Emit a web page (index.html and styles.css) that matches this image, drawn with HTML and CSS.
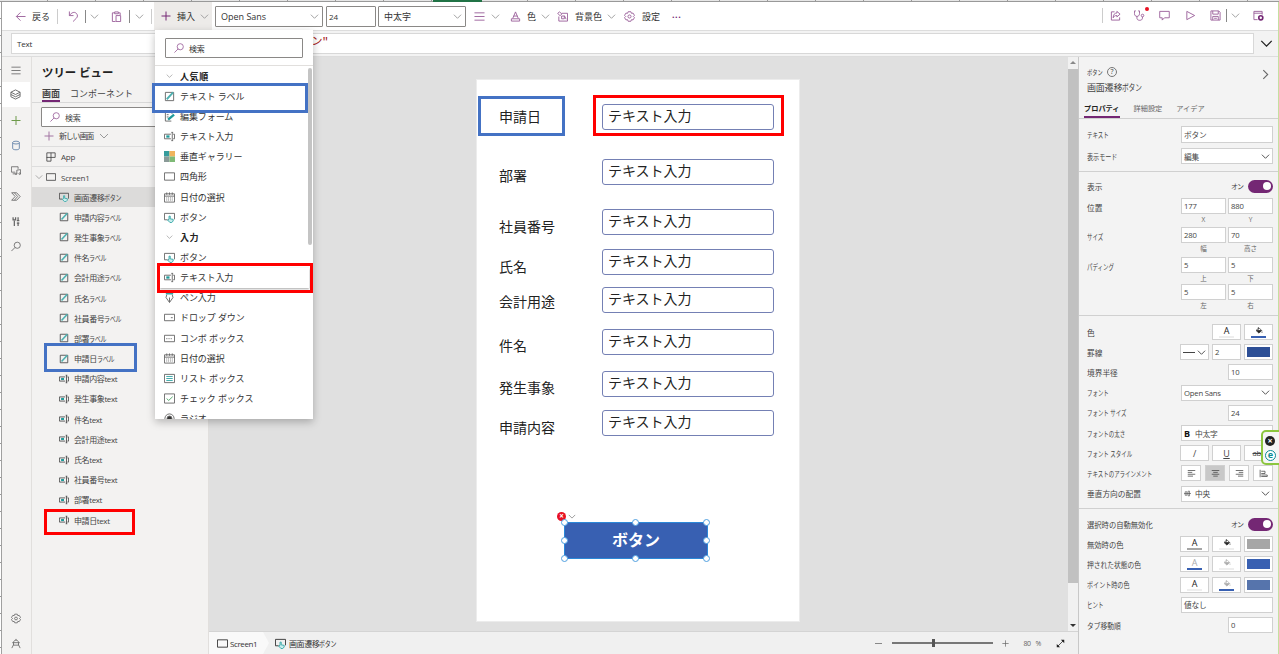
FILE: index.html
```html
<!DOCTYPE html>
<html lang="ja">
<head>
    <meta charset="UTF-8">
    <meta name="viewport" content="width=device-width, initial-scale=1.0">
    <title>Power Apps</title>
    <link rel="stylesheet" href="styles.css">
</head>
<body>
    <svg class="sprite">
        <symbol id="chev" viewBox="0 0 10 10"><path d="M1 3l4 4 4-4"/></symbol>
        <symbol id="plus" viewBox="0 0 10 10"><path d="M5 .5v9M.5 5h9"/></symbol>
        <symbol id="back" viewBox="0 0 12 12"><path d="M11.500 6H1.500M6 1.500L1.500 6 6 10.500"/></symbol>
        <symbol id="undo" viewBox="0 0 12 12"><path d="M1.500 .5v4.500H6M1.500 5C4 1.500 7 .5 9 2.500c2 2 1.500 4 0 5.500L5.500 11.500"/></symbol>
        <symbol id="paste" viewBox="0 0 12 12"><path d="M4 2H1.500v9.500H5M8 2h2v2.500M4 1h4v2H4zM5.500 5h5v6.500h-5z"/></symbol>
        <symbol id="lines" viewBox="0 0 12 12"><path d="M.5 2h11M.5 6h11M.5 10h11"/></symbol>
        <symbol id="fontcolor" viewBox="0 0 12 12"><path d="M3 8l3-7 3 7M4 5.500h4M1.500 8.500h9v2.500h-9z"/></symbol>
        <symbol id="fill" viewBox="0 0 12 12"><path d="M5 2.500h6.500v8.500H2V6M.8 2.500l2-1.500 2.500 2.200-2 2zM5 5.500h3v3H5zM8 5l2 4"/></symbol>
        <symbol id="gear" viewBox="0 0 12 12"><path d="M4.500 .8h3l.6 1.700 1.800-.2 1.500 2.500L10.200 6l1.200 1.200-1.500 2.500-1.800-.2-.6 1.700h-3l-.6-1.700-1.800.2L.6 7.200 1.800 6 .6 4.800l1.500-2.500 1.800.2z"/><circle cx="6" cy="6" r="1.700"/></symbol>
        <symbol id="search" viewBox="0 0 12 12"><circle cx="7.500" cy="4.500" r="3.700"/><path d="M5 7L.5 11.500"/></symbol>
        <symbol id="share" viewBox="0 0 12 12"><path d="M5 2H1.500v9h9V8M7.500 1.500l3.500 3-3.500 3V6C5 6 4 7 3.500 8.500 3.500 5 5 3.300 7.500 3.300z"/></symbol>
        <symbol id="steth" viewBox="0 0 12 12"><path d="M2 1H.5v3c0 4 5.500 4 5.500 0V1H4.500M3.200 7v2c0 3 6 3 6 0V7.500"/><circle cx="9.300" cy="6" r="1.400"/></symbol>
        <symbol id="comment" viewBox="0 0 12 12"><path d="M.8 1.500h10.400v7H6L3.500 11V8.500H.8z"/></symbol>
        <symbol id="play" viewBox="0 0 12 12"><path d="M2 1.500L10.500 6 2 10.500z"/></symbol>
        <symbol id="save" viewBox="0 0 12 12"><path d="M1 1h8.500L11 2.500V11H1zM3 1v3.500h6V1M3 11V7h6v4M4.500 9h3"/></symbol>
        <symbol id="publish" viewBox="0 0 12 12"><path d="M5 10.500H1v-9h9V5M1 3.500h9"/><circle cx="8.500" cy="8.500" r="2.200" stroke="#742774" stroke-width="1.800"/></symbol>
        <symbol id="layers" viewBox="0 0 12 12"><path d="M6 1l5 2.500L6 6 1 3.500zM1 3.500v5L6 11l5-2.500v-5M1 6l5 2.500L11 6"/></symbol>
        <symbol id="db" viewBox="0 0 12 12"><ellipse cx="6" cy="2.500" rx="4" ry="1.700"/><path d="M2 2.500v7c0 2.200 8 2.200 8 0v-7"/></symbol>
        <symbol id="media" viewBox="0 0 12 12"><path d="M5 8H.5V1.500h8V4M2 10h3M7 10V5.500l4.500-.5v5"/><circle cx="6" cy="10" r="1"/><circle cx="10.500" cy="9.800" r="1"/></symbol>
        <symbol id="flow" viewBox="0 0 12 12"><path d="M.8 1.500h6L11 6l-4.200 4.500h-6L5 6zM4 1.500L8 6l-4 4.500"/></symbol>
        <symbol id="tools" viewBox="0 0 12 12"><path d="M4 5v6.500M2.500 1v3h3V1M8.500 1v4M8.500 7v4.500M7 5h3M7 8h3" stroke-width="1.500"/></symbol>
        <symbol id="robot" viewBox="0 0 12 12"><path d="M3 5c0-4 6-4 6 0v3H3zM1 11.500L3 7.500M11 11.500L9 7.500M1.500 5h9M6 2V.5"/></symbol>
        <symbol id="app" viewBox="0 0 12 12"><path d="M1 1h10v5.500H1zM1 6v5h5V1"/></symbol>
        <symbol id="rect" viewBox="0 0 12 12"><path d="M.5 2h11v8H.5z"/></symbol>
        <symbol id="label" viewBox="0 0 12 12"><path d="M1.500 1.500h9v9h-9z"/><path d="M3 9l7-7.500" stroke="#4db0b0" stroke-width="2"/></symbol>
        <symbol id="input" viewBox="0 0 12 12"><path d="M7.500 3.500H.5v5h7M9 1.500v9M8 1.500h2M8 10.500h2M10 3.500h1.500v5H10"/><path d="M2.500 6H6" stroke="#1f9a9a" stroke-width="2.500"/></symbol>
        <symbol id="button" viewBox="0 0 12 12"><path d="M4 8.500H.5V1.500h11V8"/><path d="M5.500 8V4.500h1.300v3L10 8v1.800L8.500 11.500h-2L4 8.800z" stroke="#34a6a6" fill="#c9eded"/></symbol>
        <symbol id="form" viewBox="0 0 12 12"><path d="M8 11H1.500V1H7l2 2M3 4h2M3 6.500h2"/><path d="M4.500 9.500L11 4" stroke="#1f9a9a" stroke-width="2.500"/></symbol>
        <symbol id="gallery" viewBox="0 0 12 12"><g stroke="none"><path fill="#359c9c" d="M0 0h6v6H0z"/><path fill="#f0b45c" d="M6 0h6v6H6z"/><path fill="#8a9a98" d="M0 6h6v6H0z"/><path fill="#7fba76" d="M6 6h6v6H6z"/></g></symbol>
        <symbol id="date" viewBox="0 0 12 12"><path d="M.5 2h11v9H.5zM.5 4.500h11M3 .5V3M6 .5V3M9 .5V3"/><path d="M2.500 6.500h7M2.500 8.700h7" stroke-dasharray="1 1"/></symbol>
        <symbol id="pen" viewBox="0 0 12 12"><path d="M3 3l-.8 3L6 11.500 9.800 6 9 3M6 11V6"/><path d="M2 1.500h8" stroke="#34a6a6" stroke-width="2.500"/></symbol>
        <symbol id="drop" viewBox="0 0 12 12"><path d="M.5 2.500h11v7H.5zM7.500 6.200h2"/></symbol>
        <symbol id="combo" viewBox="0 0 12 12"><path d="M.5 2.500h11v7H.5z"/><path d="M2.500 6.200h7" stroke-dasharray="1.200 1.200"/></symbol>
        <symbol id="list" viewBox="0 0 12 12"><path d="M.5 1.500h11v9H.5z"/><path d="M2.500 3.800h7M2.500 6h7M2.500 8.200h7" stroke="#34a6a6"/></symbol>
        <symbol id="check" viewBox="0 0 12 12"><path d="M.5 1h11v10H.5z"/><path d="M3 6l2 2.200L9.500 4" stroke="#4aa564"/></symbol>
        <symbol id="radio" viewBox="0 0 12 12"><circle cx="6" cy="6" r="5"/><circle cx="6" cy="6" r="2.700" fill="#333"/></symbol>
        <symbol id="bucket" viewBox="0 0 12 12"><path d="M1.500 6L6 2l4 4-4 4zM5 1v4" /><path d="M2.500 6h7L6 9.500zM10.500 7.500v2" fill="currentColor"/></symbol>
        <symbol id="al" viewBox="0 0 12 12"><path d="M1 2h10M1 4.500h6M1 7h10M1 9.500h7"/></symbol>
        <symbol id="ac" viewBox="0 0 12 12"><path d="M1 2h10M3 4.500h6M1 7h10M3 9.500h6"/></symbol>
        <symbol id="ar" viewBox="0 0 12 12"><path d="M1 2h10M5 4.500h6M1 7h10M4 9.500h7"/></symbol>
        <symbol id="aj" viewBox="0 0 12 12"><path d="M1.500 1v10M3 3h5v3H3M3 8h8v2H3"/></symbol>
        <symbol id="mid" viewBox="0 0 12 12"><path d="M0 6h12M2 3h3v6H2zM7 2h2.500v8H7z"/></symbol>
        <symbol id="expand" viewBox="0 0 12 12"><path d="M2 10l8-8"/><path d="M6.500 1h4.500v4.500zM1 6.500V11h4.500z" fill="currentColor" stroke="none"/></symbol>
    </svg>

    <div class="sheet-top"><div class="sheet-active"></div></div>
    <div class="frame">
        <div class="sheet-left"></div>
        <div class="studio">
            <div class="toolbar">
                <div class="tools">
                    <svg class="i"><use href="#back"/></svg>
                    <span>戻る</span>
                    <i class="sep"></i>
                    <svg class="i"><use href="#undo"/></svg>
                    <i class="sep dark"></i>
                    <svg class="c"><use href="#chev"/></svg>
                    <svg class="i"><use href="#paste"/></svg>
                    <i class="sep dark"></i>
                    <svg class="c"><use href="#chev"/></svg>
                    <i class="sep"></i>
                    <div class="insert">
                        <svg class="plus"><use href="#plus"/></svg>
                        <span>挿入</span>
                        <svg class="c"><use href="#chev"/></svg>
                    </div>
                    <div class="combo">Open Sans<svg class="c"><use href="#chev"/></svg></div>
                    <div class="combo num">24</div>
                    <div class="combo">中太字<svg class="c"><use href="#chev"/></svg></div>
                    <svg class="i"><use href="#lines"/></svg>
                    <svg class="c"><use href="#chev"/></svg>
                    <svg class="i"><use href="#fontcolor"/></svg>
                    <span>色</span>
                    <svg class="c"><use href="#chev"/></svg>
                    <svg class="i"><use href="#fill"/></svg>
                    <span>背景色</span>
                    <svg class="c"><use href="#chev"/></svg>
                    <svg class="i"><use href="#gear"/></svg>
                    <span>設定</span>
                    <span class="dots">···</span>
                </div>
                <div class="actions">
                    <i class="sep"></i>
                    <svg class="i"><use href="#share"/></svg>
                    <div class="health"><svg class="i"><use href="#steth"/></svg><i class="dot"></i></div>
                    <svg class="i"><use href="#comment"/></svg>
                    <svg class="i"><use href="#play"/></svg>
                    <svg class="i"><use href="#save"/></svg>
                    <i class="sep dark"></i>
                    <svg class="c"><use href="#chev"/></svg>
                    <svg class="i"><use href="#publish"/></svg>
                </div>
            </div>

            <div class="formula">
                <div class="formula-box"><span class="prop-name">Text</span><span class="expr">"ボタン"</span></div>
                <svg class="formula-chev"><use href="#chev"/></svg>
            </div>

            <div class="main">
                <div class="rail">
                    <svg><use href="#lines"/></svg>
                    <div class="rail-on"><svg><use href="#layers"/></svg></div>
                    <svg class="green"><use href="#plus"/></svg>
                    <svg class="blue"><use href="#db"/></svg>
                    <svg><use href="#media"/></svg>
                    <svg><use href="#flow"/></svg>
                    <svg><use href="#tools"/></svg>
                    <svg><use href="#search"/></svg>
                    <svg class="bottom"><use href="#gear"/></svg>
                    <svg><use href="#robot"/></svg>
                </div>

                <div class="tree">
                    <div class="tree-title">ツリー ビュー</div>
                    <div class="tree-tabs"><span class="on">画面</span><span>コンポーネント</span></div>
                    <div class="search"><svg><use href="#search"/></svg>検索</div>
                    <div class="new-screen"><svg><use href="#plus"/></svg><span>新しい画面</span><svg class="c"><use href="#chev"/></svg></div>
                    <div class="app-row"><svg><use href="#app"/></svg>App</div>
                    <div class="screen-row"><svg class="c"><use href="#chev"/></svg><svg><use href="#rect"/></svg>Screen1</div>
                    <div class="node on"><svg><use href="#button"/></svg>画面遷移<span class="kana">ボタン</span></div>
                    <div class="node"><svg><use href="#label"/></svg>申請内容<span class="kana">ラベル</span></div>
                    <div class="node"><svg><use href="#label"/></svg>発生事象<span class="kana">ラベル</span></div>
                    <div class="node"><svg><use href="#label"/></svg>件名<span class="kana">ラベル</span></div>
                    <div class="node"><svg><use href="#label"/></svg>会計用途<span class="kana">ラベル</span></div>
                    <div class="node"><svg><use href="#label"/></svg>氏名<span class="kana">ラベル</span></div>
                    <div class="node"><svg><use href="#label"/></svg>社員番号<span class="kana">ラベル</span></div>
                    <div class="node"><svg><use href="#label"/></svg>部署<span class="kana">ラベル</span></div>
                    <div class="node"><svg><use href="#label"/></svg>申請日<span class="kana">ラベル</span></div>
                    <div class="node"><svg><use href="#input"/></svg>申請内容text</div>
                    <div class="node"><svg><use href="#input"/></svg>発生事象text</div>
                    <div class="node"><svg><use href="#input"/></svg>件名text</div>
                    <div class="node"><svg><use href="#input"/></svg>会計用途text</div>
                    <div class="node"><svg><use href="#input"/></svg>氏名text</div>
                    <div class="node"><svg><use href="#input"/></svg>社員番号text</div>
                    <div class="node"><svg><use href="#input"/></svg>部署text</div>
                    <div class="node"><svg><use href="#input"/></svg>申請日text</div>
                </div>

                <div class="center">
                    <div class="stage">
                        <div class="canvas">
                            <div class="lbl r1">申請日</div><div class="txt r1">テキスト入力</div>
                            <div class="lbl r2">部署</div><div class="txt r2">テキスト入力</div>
                            <div class="lbl r3">社員番号</div><div class="txt r3">テキスト入力</div>
                            <div class="lbl r4">氏名</div><div class="txt r4">テキスト入力</div>
                            <div class="lbl r5">会計用途</div><div class="txt r5">テキスト入力</div>
                            <div class="lbl r6">件名</div><div class="txt r6">テキスト入力</div>
                            <div class="lbl r7">発生事象</div><div class="txt r7">テキスト入力</div>
                            <div class="lbl r8">申請内容</div><div class="txt r8">テキスト入力</div>
                            <div class="error"><b>×</b><svg><use href="#chev"/></svg></div>
                            <div class="go">ボタン
                                <i class="h t l"></i><i class="h t m"></i><i class="h t r"></i>
                                <i class="h c l"></i><i class="h c r"></i>
                                <i class="h b l"></i><i class="h b m"></i><i class="h b r"></i>
                            </div>
                        </div>
                        <div class="scroll"><i class="up"></i><div class="thumb"></div><i class="down"></i></div>
                    </div>
                    <div class="status">
                        <div class="crumb"><svg><use href="#rect"/></svg>Screen1</div>
                        <div class="crumb2"><svg><use href="#button"/></svg>画面遷移<span class="kana">ボタン</span></div>
                        <div class="zoom">
                            <i class="minus"></i>
                            <div class="slider"><i></i></div>
                            <svg class="zplus"><use href="#plus"/></svg>
                            <span>80</span><span class="pct">%</span>
                            <svg class="expand"><use href="#expand"/></svg>
                        </div>
                    </div>
                </div>

                <div class="props">
                    <div class="props-head">
                        <div class="kind"><span class="kana">ボタン</span><i>?</i></div>
                        <div class="name">画面遷移<span class="kana">ボタン</span></div>
                        <svg><use href="#chev"/></svg>
                    </div>
                    <div class="props-tabs"><span class="on">プロパティ</span><span>詳細設定</span><span>アイデア</span></div>
                    <div class="group g1">
                        <div class="row"><span class="n1">テキスト</span><div class="f w3">ボタン</div></div>
                        <div class="row"><span class="n2">表示モード</span><div class="f w3">編集<svg><use href="#chev"/></svg></div></div>
                    </div>
                    <div class="group g2">
                        <div class="row"><span>表示</span><div class="on-off"><em>オン</em><i class="toggle"></i></div></div>
                        <div class="row pair"><span>位置</span><div class="cell"><div class="f">177</div><small>X</small></div><div class="cell"><div class="f">880</div><small>Y</small></div></div>
                        <div class="row pair"><span class="n1">サイズ</span><div class="cell"><div class="f">280</div><small>幅</small></div><div class="cell"><div class="f">70</div><small>高さ</small></div></div>
                        <div class="row pair short"><span class="n1">パディング</span><div class="cell"><div class="f">5</div><small>上</small></div><div class="cell"><div class="f">5</div><small>下</small></div></div>
                        <div class="row pair short"><span></span><div class="cell"><div class="f">5</div><small>左</small></div><div class="cell"><div class="f">5</div><small>右</small></div></div>
                    </div>
                    <div class="group g3">
                        <div class="row"><span>色</span><div class="f sw"><b class="ink pale">A</b></div><div class="f sw"><b class="ink blue"><svg><use href="#bucket"/></svg></b></div></div>
                        <div class="row"><span>罫線</span><div class="f w1 dash"><i></i><svg><use href="#chev"/></svg></div><div class="f w1">2</div><div class="f sw"><i class="color navy"></i></div></div>
                        <div class="row"><span>境界半径</span><div class="f w2">10</div></div>
                        <div class="row"><span class="n1">フォント</span><div class="f w3">Open Sans<svg><use href="#chev"/></svg></div></div>
                        <div class="row"><span class="n1">フォント サイズ</span><div class="f w2">24</div></div>
                        <div class="row"><span class="n1">フォントの太さ</span><div class="f w3"><b class="bold">B</b>中太字</div></div>
                        <div class="row"><span class="n1">フォント スタイル</span><div class="f sw big">/</div><div class="f sw big"><u>U</u></div><div class="f sw"><s>abc</s></div></div>
                        <div class="row align"><span class="n1">テキストのアラインメント</span><div class="f"><svg><use href="#al"/></svg></div><div class="f sel"><svg><use href="#ac"/></svg></div><div class="f"><svg><use href="#ar"/></svg></div><div class="f"><svg><use href="#aj"/></svg></div></div>
                        <div class="row"><span>垂直方向の配置</span><div class="f w3"><svg class="lead"><use href="#mid"/></svg>中央<svg><use href="#chev"/></svg></div></div>
                    </div>
                    <div class="group g4">
                        <div class="row"><span class="n4">選択時の自動無効化</span><div class="on-off"><em>オン</em><i class="toggle"></i></div></div>
                        <div class="row"><span class="n4">無効時の色</span><div class="f sw"><b class="ink gray">A</b></div><div class="f sw"><b class="ink pale"><svg><use href="#bucket"/></svg></b></div><div class="f sw"><i class="color silver"></i></div></div>
                        <div class="row"><span class="n3">押された状態の色</span><div class="f sw"><b class="ink blue dim">A</b></div><div class="f sw"><b class="ink pale dim"><svg><use href="#bucket"/></svg></b></div><div class="f sw"><i class="color royal"></i></div></div>
                        <div class="row"><span class="n2">ポイント時の色</span><div class="f sw"><b class="ink pale">A</b></div><div class="f sw"><b class="ink blue dim"><svg><use href="#bucket"/></svg></b></div><div class="f sw"><i class="color steel"></i></div></div>
                        <div class="row"><span class="n1">ヒント</span><div class="f w3">値なし</div></div>
                        <div class="row"><span class="n3">タブ移動順</span><div class="f w2">0</div></div>
                    </div>
                </div>
            </div>
        </div>
    </div>

    <div class="menu">
        <div class="search"><svg><use href="#search"/></svg>検索</div>
        <div class="menu-list">
            <div class="head"><svg><use href="#chev"/></svg>人気順</div>
            <div class="item"><svg><use href="#label"/></svg>テキスト ラベル</div>
            <div class="item"><svg><use href="#form"/></svg>編集フォーム</div>
            <div class="item"><svg><use href="#input"/></svg>テキスト入力</div>
            <div class="item"><svg><use href="#gallery"/></svg>垂直ギャラリー</div>
            <div class="item"><svg><use href="#rect"/></svg>四角形</div>
            <div class="item"><svg><use href="#date"/></svg>日付の選択</div>
            <div class="item"><svg><use href="#button"/></svg>ボタン</div>
            <div class="head"><svg><use href="#chev"/></svg>入力</div>
            <div class="item"><svg><use href="#button"/></svg>ボタン</div>
            <div class="item hover"><svg><use href="#input"/></svg>テキスト入力</div>
            <div class="item"><svg><use href="#pen"/></svg>ペン入力</div>
            <div class="item"><svg><use href="#drop"/></svg>ドロップ ダウン</div>
            <div class="item"><svg><use href="#combo"/></svg>コンボ ボックス</div>
            <div class="item"><svg><use href="#date"/></svg>日付の選択</div>
            <div class="item"><svg><use href="#list"/></svg>リスト ボックス</div>
            <div class="item"><svg><use href="#check"/></svg>チェック ボックス</div>
            <div class="item"><svg><use href="#radio"/></svg>ラジオ</div>
        </div>
        <i class="menu-thumb"></i>
    </div>

    <div class="mark m1"></div>
    <div class="mark m2 red"></div>
    <div class="mark m3"></div>
    <div class="mark m4 red"></div>
    <div class="mark m5"></div>
    <div class="mark m6 red"></div>

    <div class="widget"><b>×</b><b class="e">e</b></div>
</body>
</html>
```
FILE: styles.css
```css
* {
    box-sizing: border-box;
}

body {
    margin: 0;
    width: 1279px;
    height: 654px;
    overflow: hidden;
    position: relative;
    display: flex;
    flex-direction: column;
    background: #fff;
    color: #333;
    font-family: "Open Sans", "Noto Sans CJK JP", sans-serif;
    font-size: 9px;
    white-space: nowrap;
}

i, em {
    font-style: normal;
}

svg {
    display: block;
    flex: none;
    width: 11px;
    height: 11px;
    fill: none;
    stroke: currentColor;
    stroke-width: 1;
    overflow: visible;
}

.sprite {
    position: absolute;
    width: 0;
    height: 0;
}

/* spreadsheet edges around the app */
.sheet-top {
    height: 2px;
    flex: none;
    border-bottom: 1px solid #999;
    background: repeating-linear-gradient(90deg, #e6e6e6 0, #e6e6e6 47px, #999 47px, #999 48px);
}

.sheet-active {
    width: 49px;
    height: 2px;
    margin-left: 433px;
    background: #217346;
}

.frame {
    flex: 1;
    display: flex;
    min-height: 0;
}

.sheet-left {
    width: 2px;
    border-right: 1px solid #a0a0a0;
    background: repeating-linear-gradient(#fff 0, #fff 16px, #999 16px, #999 17px);
}

.studio {
    flex: 1;
    min-width: 0;
    display: flex;
    flex-direction: column;
    border-right: 1px solid #c5dfa0;
}

/* toolbar */
.toolbar {
    height: 28px;
    flex: none;
    display: flex;
    justify-content: space-between;
    font-size: 9px;
}

.tools, .actions {
    height: 27px;
    display: grid;
    align-items: center;
}

.tools {
    padding-left: 13px;
    grid-template-columns: 17px 25px 11px 17px 5px 21px 18px 6px 16px 3px 61px 111px 52px 96px 17px 19px 17px 14px 16px 18px 32px 17px 18px 30px 12px;
}

.actions {
    grid-template-columns: 8px 24px 25px 26px 25px 16px 5px 22px 25px;
}

.i {
    color: #9a5f9a;
}

.c {
    width: 9px;
    height: 9px;
    color: #999;
}

.sep {
    width: 1px;
    height: 15px;
    background: #ccc;
}

.dark {
    height: 13px;
    background: #888;
}

.insert {
    height: 28px;
    width: 58px;
    padding-left: 7px;
    display: flex;
    align-items: center;
    background: #edebe9;
}

.insert .plus {
    width: 10px;
    height: 10px;
    margin-right: 6px;
    color: #742774;
}

.insert .c {
    margin-left: 5px;
}

.combo {
    height: 21px;
    width: 108px;
    padding: 0 3px 0 5px;
    display: flex;
    align-items: center;
    justify-content: space-between;
    border: 1px solid #8a8886;
    border-radius: 1px;
}

.combo.num {
    width: 50px;
    padding-left: 2px;
    font-size: 8px;
}

.num + .combo {
    width: 88px;
}

.dots {
    color: #742774;
    font-weight: bold;
    letter-spacing: 0.5px;
}

.health {
    position: relative;
}

.dot {
    position: absolute;
    left: 11px;
    top: -3px;
    width: 4px;
    height: 4px;
    border-radius: 50%;
    background: #e81123;
}

/* formula bar */
.formula {
    height: 27px;
    flex: none;
    display: flex;
    padding: 2px 0 0 9px;
    border-top: 1px solid #ddd;
    border-bottom: 1px solid #ddd;
    background: #f3f3f3;
}

.formula-box {
    width: 1243px;
    height: 21px;
    display: flex;
    align-items: center;
    padding-left: 5px;
    border: 1px solid #d8d8d8;
    background: #fff;
    font-size: 8px;
}

.prop-name {
    width: 267px;
    letter-spacing: -0.2px;
}

.expr {
    color: #a31515;
    font-family: "Liberation Mono", "Noto Sans CJK JP", monospace;
    font-size: 11px;
    letter-spacing: -0.4px;
    line-height: 12px;
    margin-top: -3px;
}

.formula-chev {
    width: 13px;
    height: 13px;
    margin: 4px 0 0 6px;
    color: #222;
}

.main {
    flex: 1;
    min-height: 0;
    display: flex;
    background: #f3f2f1;
}

/* left rail */
.rail {
    width: 30px;
    flex: none;
    display: flex;
    flex-direction: column;
    align-items: center;
    border-right: 1px solid #e1dfdd;
    padding: 0 2px 0 0;
    color: #666;
}

.rail > svg {
    width: 10px;
    margin: 7.1px 0;
    height: 11px;
}

.rail > svg:first-child {
    margin: 8px 0 6px;
}

.rail-on {
    width: 28px;
    height: 25px;
    display: grid;
    place-items: center;
    background: #fff;
}

.rail .green {
    color: #6d9a4a;
    margin-top: 8px;
}

.rail .blue {
    color: #5a7ca5;
}

.rail > svg.bottom {
    margin-top: auto;
}

.rail > svg:last-child {
    margin-bottom: 5px;
}

/* tree view */
.tree {
    width: 177px;
    flex: none;
    border-right: 1px solid #e1dfdd;
    font-size: 8px;
    color: #444;
}

.tree svg {
    width: 10px;
    height: 10px;
}

.tree-title {
    height: 29px;
    padding-left: 10px;
    font-size: 11.4px;
    font-weight: bold;
    line-height: 31px;
    color: #222;
}

.tree-tabs {
    height: 17px;
    display: flex;
    gap: 10px;
    padding-left: 10px;
    border-bottom: 1px solid #d8d8d8;
    font-size: 9px;
    line-height: 16px;
}

.tree-tabs .on {
    height: 16px;
    border-bottom: 2px solid #742774;
    font-weight: bold;
}

.search {
    display: flex;
    align-items: center;
    border: 1px solid #8a8886;
    border-radius: 1px;
    background: #fff;
    font-size: 8px;
}

.search svg {
    width: 10px;
    height: 10px;
    color: #9a5f9a;
}

.tree .search {
    height: 20px;
    margin: 4px 8px 0 9px;
    padding-left: 8px;
    gap: 5px;
    letter-spacing: -0.2px;
}

.new-screen {
    height: 20px;
    display: flex;
    align-items: center;
    gap: 5px;
    padding: 0 0 2px 12px;
    border-bottom: 1px solid #ddd;
}

.new-screen span {
    letter-spacing: -1.2px;
    margin-right: 1px;
}

.new-screen svg:first-child {
    color: #a274a2;
}

.app-row, .screen-row {
    height: 20px;
    display: flex;
    align-items: center;
    gap: 5px;
    padding-left: 14px;
    border-bottom: 1px solid #ddd;
    letter-spacing: -0.2px;
}

.screen-row {
    padding-left: 3px;
    border: 0;
}

.screen-row .c {
    width: 8px;
    margin-right: -2px;
}

.node {
    height: 20.19px;
    display: flex;
    align-items: center;
    padding-left: 27px;
    letter-spacing: -0.4px;
}

.node svg {
    margin-right: 5px;
}

.node.on {
    background: #dcdbda;
}

.kana {
    display: inline-block;
    transform: scaleX(0.75);
    transform-origin: left;
}

/* design surface */
.center {
    width: 870px;
    flex: none;
    display: flex;
    flex-direction: column;
}

.stage {
    flex: 1;
    display: flex;
    justify-content: space-between;
    background: #e0e0e0;
}

.canvas {
    position: relative;
    width: 324px;
    height: 543px;
    margin: 22px 0 0 267px;
    border: 1px solid #ececec;
    background: #fff;
    color: #222;
    font-size: 14px;
    line-height: 20px;
}

.lbl, .txt {
    position: absolute;
}

.lbl {
    left: 22px;
}

.txt {
    left: 125px;
    width: 172px;
    height: 26px;
    padding-left: 5px;
    line-height: 21px;
    border: 1px solid #7480b4;
    border-radius: 3px;
}

.lbl.r1 { top: 27px; }
.lbl.r2 { top: 86px; }
.lbl.r3 { top: 137px; }
.lbl.r4 { top: 177px; }
.lbl.r5 { top: 212px; }
.lbl.r6 { top: 256px; }
.lbl.r7 { top: 298px; }
.lbl.r8 { top: 338px; }
.txt.r1 { top: 24px; }
.txt.r2 { top: 79px; }
.txt.r3 { top: 129px; }
.txt.r4 { top: 169px; }
.txt.r5 { top: 207px; }
.txt.r6 { top: 249px; }
.txt.r7 { top: 291px; }
.txt.r8 { top: 330px; }

.error {
    position: absolute;
    left: 80px;
    top: 432px;
    display: flex;
    gap: 2px;
    color: #888;
}

.error b {
    width: 9px;
    height: 9px;
    border-radius: 50%;
    background: #e81123;
    color: #fff;
    font-size: 8px;
    line-height: 8px;
    text-align: center;
}

.error svg {
    width: 8px;
    height: 9px;
}

.go {
    position: absolute;
    left: 87px;
    top: 442px;
    width: 144px;
    height: 37px;
    border: 1px solid #2b88d8;
    background: #3860b2;
    color: #fff;
    font-size: 16px;
    font-weight: bold;
    line-height: 34px;
    text-align: center;
}

.h {
    position: absolute;
    width: 7px;
    height: 7px;
    border: 1px solid #50a0e0;
    border-radius: 50%;
    background: #fff;
}

.h.t { top: -4px; }
.h.c { top: 14px; }
.h.b { bottom: -4px; }
.h.l { left: -4px; }
.h.m { left: 67px; }
.h.r { right: -3px; }

.scroll {
    width: 11px;
    display: flex;
    flex-direction: column;
    align-items: center;
    background: #f1f1f1;
    border-right: 1px solid #ddd;
}

.up, .down {
    border: 3px solid transparent;
}

.up {
    border-bottom: 3px solid #888;
    margin: 1px 0 5px;
}

.down {
    margin: auto 0 1px;
    border-top: 3px solid #333;
}

.thumb {
    width: 10px;
    height: 514px;
    background: #c1c1c1;
}

.status {
    height: 23px;
    flex: none;
    display: flex;
    align-items: center;
    border-top: 1px solid #d4d4d4;
    background: #f0f0f0;
    font-size: 8px;
    letter-spacing: -0.4px;
}

.crumb {
    width: 60px;
    height: 22px;
    display: flex;
    align-items: center;
    gap: 2px;
    padding-left: 8px;
    background: #f9f9f9;
    clip-path: polygon(0 0, 54px 0, 100% 50%, 54px 100%, 0 100%);
}

.crumb2 {
    display: flex;
    align-items: center;
    margin-left: 6px;
}

.crumb2 svg {
    margin-right: 3px;
}

.zoom {
    display: flex;
    align-items: center;
    margin-left: auto;
    padding-right: 14px;
    font-size: 7px;
    color: #666;
}

.minus {
    width: 7px;
    height: 1px;
    background: #888;
    margin-right: 10px;
}

.slider {
    width: 101px;
    height: 2px;
    background: #777;
}

.slider i {
    display: block;
    width: 3px;
    height: 8px;
    margin: -3px 0 0 40px;
    background: #555;
}

.zplus {
    width: 7px;
    height: 7px;
    margin: 0 14px 0 9px;
}

.pct {
    margin: 0 15px 0 5px;
}

.expand {
    width: 9px;
    height: 9px;
    color: #222;
}

/* properties */
.props {
    flex: 1;
    border-left: 1px solid #c8c8c8;
    background: #f3f3f3;
    margin-left: -1px;
    font-size: 7.7px;
    color: #444;
}

.props-head {
    height: 41px;
    position: relative;
    padding: 8px 0 0 8px;
}

.kind {
    height: 14px;
    display: flex;
    align-items: center;
    font-size: 7px;
}

.kind i {
    width: 10px;
    height: 10px;
    margin-left: -1px;
    border: 1px solid #777;
    border-radius: 50%;
    line-height: 8px;
    text-align: center;
}

.name {
    margin-top: 1px;
    font-size: 9px;
    letter-spacing: -0.2px;
    line-height: 16px;
}

.props-head svg {
    position: absolute;
    right: 7px;
    top: 12px;
    color: #666;
    transform: rotate(-90deg);
}

.props-tabs {
    height: 21px;
    display: flex;
    padding-left: 5px;
    border-bottom: 1px solid #d0d0d0;
    font-size: 7.2px;
    line-height: 20px;
    color: #666;
}

.props-tabs span {
    margin-right: 14px;
}

.props-tabs .on {
    height: 20px;
    border-bottom: 2px solid #742774;
    color: #222;
    font-weight: bold;
}

.group {
    padding-right: 5px;
    border-bottom: 1px solid #d0d0d0;
}

.g1 {
    height: 53px;
    padding-top: 4px;
}

.g2 {
    height: 144px;
    padding-top: 4px;
}

.g3 {
    height: 193px;
    padding-top: 6px;
}

.g4 {
    padding-top: 5px;
    border: 0;
}

.row {
    height: 20.2px;
    display: flex;
    align-items: center;
    gap: 2px;
    padding-left: 8px;
}

.g1 .row {
    height: 22px;
}

.g1 .row:first-child .f {
    height: 17px;
}

.row > span {
    flex: 1 1 0;
    width: 0;
    transform-origin: left;
}

.row .n1 { transform: scaleX(0.71); }
.row .n2 { transform: scaleX(0.79); }
.row .n3 { transform: scaleX(0.88); }
.row .n4 { transform: scaleX(0.95); }

.row.pair {
    height: 29.2px;
    align-items: flex-start;
}

.row.pair.short {
    height: 27px;
}

.pair > span {
    line-height: 24px;
}

.cell {
    margin-top: 2px;
    text-align: center;
}

.cell small {
    display: block;
    font-size: 6.5px;
    line-height: 12px;
    color: #666;
}

.f {
    width: 45px;
    height: 16px;
    flex: none;
    display: flex;
    align-items: center;
    padding: 0 2px;
    border: 1px solid #d0d0d0;
    background: #fff;
    letter-spacing: -0.2px;
}

.f.w3 {
    width: 92px;
}

.f.w2 {
    width: 45px;
}

.f.w1, .f.sw {
    width: 29px;
}

.f.w1 + .f, .f.sw + .f {
    margin-left: 1px;
}

.f svg {
    width: 9px;
    height: 9px;
    margin-left: auto;
}

.f .lead {
    width: 7px;
    margin: 0 4px 0 0;
}

.f.sw {
    justify-content: center;
}

.f.big {
    font-size: 9px;
}

.bold {
    width: 11px;
    color: #111;
    font-size: 9px;
}

.dash i {
    width: 12px;
    height: 1px;
    background: #444;
}

.ink {
    width: 15px;
    height: 12px;
    border-bottom: 2px solid #eee;
    color: #222;
    font-size: 9px;
    font-weight: normal;
    line-height: 10px;
    text-align: center;
}

.ink svg {
    width: 8px;
    margin: 0 auto;
}

.ink.blue { border-color: #3860b2; }
.ink.gray { border-color: #a6a6a6; }
.ink.dim { color: #aaa; }

.color {
    width: 24px;
    height: 10px;
}

.navy { background: #2d4f96; }
.silver { background: #a6a6a6; }
.royal { background: #3860b2; }
.steel { background: #5674ac; }

.align {
    gap: 4px;
}

.align .f {
    width: 20px;
}

.align svg {
    margin: 0 auto;
}

.align .sel {
    background: #c8c8c8;
}

.on-off {
    display: flex;
    align-items: center;
    gap: 5px;
}

.on-off em {
    font-size: 7px;
    letter-spacing: -1px;
}

.toggle {
    width: 25px;
    height: 13px;
    border-radius: 7px;
    background: #742774;
}

.toggle::after {
    content: "";
    display: block;
    width: 8px;
    height: 8px;
    margin: 2.5px 0 0 15px;
    border-radius: 50%;
    background: #fff;
}

/* insert menu */
.menu {
    position: absolute;
    left: 155px;
    top: 30px;
    width: 158px;
    height: 389px;
    background: #fff;
    box-shadow: 0 3px 8px rgba(0, 0, 0, 0.25);
    font-size: 9px;
}

.menu .search {
    width: 138px;
    height: 20px;
    margin: 8px 0 0 10px;
    padding-left: 8px;
    gap: 5px;
    letter-spacing: -0.2px;
}

.menu-list {
    height: 354px;
    margin-top: 7px;
    overflow: hidden;
    border-top: 1px solid #e1dfdd;
}

.head, .item {
    height: 20.17px;
    display: flex;
    align-items: center;
    padding-left: 9px;
    gap: 5px;
    letter-spacing: -0.08px;
}

.head {
    font-weight: bold;
    color: #222;
    letter-spacing: 0.6px;
}

.head svg {
    width: 7px;
    height: 8px;
    margin: 0 2px;
    color: #999;
}

.item svg {
    color: #666;
}

.item.hover {
    margin: 0 4px 0 5px;
    padding-left: 4px;
    box-shadow: 0 1px 2px rgba(0, 0, 0, 0.35);
}

.menu-thumb {
    position: absolute;
    right: 1px;
    top: 38px;
    width: 4px;
    height: 177px;
    border-radius: 2px;
    background: #c4c4c4;
}

/* highlight boxes */
.mark {
    position: absolute;
    border: 3px solid #4472c4;
}

.mark.red {
    border-color: #f00;
}

.m1 { left: 152px; top: 83px; width: 156px; height: 30px; }
.m2 { left: 157px; top: 263px; width: 156px; height: 30px; }
.m3 { left: 44px; top: 343px; width: 93px; height: 29px; }
.m4 { left: 44px; top: 509px; width: 91px; height: 26px; }
.m5 { left: 478px; top: 96px; width: 87px; height: 40px; }
.m6 { left: 593px; top: 95px; width: 191px; height: 41px; }

.widget {
    position: absolute;
    left: 1261px;
    top: 430px;
    width: 20px;
    height: 35px;
    padding: 4px 0 0 2px;
    border: 2px solid #8cc63f;
    border-radius: 5px 0 0 5px;
    background: #f5f5f5;
}

.widget b {
    display: block;
    width: 10px;
    height: 10px;
    margin-bottom: 4px;
    border-radius: 50%;
    background: #222;
    color: #fff;
    line-height: 9px;
    text-align: center;
}

.widget .e {
    width: 11px;
    height: 11px;
    border: 1.5px solid #0a8a94;
    background: #fff;
    color: #0a8a94;
    line-height: 7px;
}
```
